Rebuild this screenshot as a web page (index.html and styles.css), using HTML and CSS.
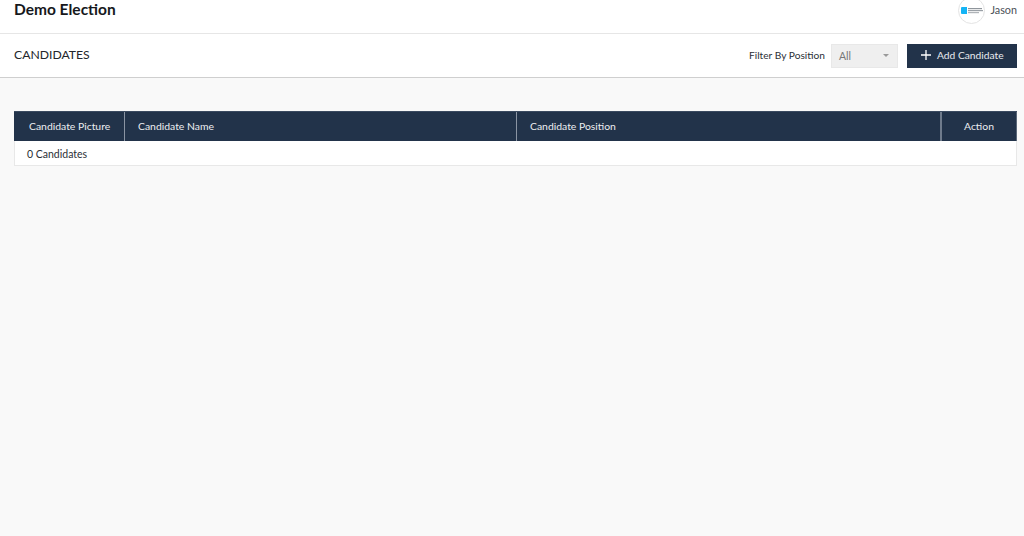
FILE: index.html
```html
<!DOCTYPE html>
<html lang="en">
<head>
<meta charset="utf-8">
<title>Demo Election</title>
<link rel="stylesheet" href="styles.css">
</head>
<body>
<header class="topbar">
  <h1 class="title">Demo Election</h1>
  <div class="user">
    <span class="avatar">
      <svg width="22" height="7" viewBox="0 0 22 7" aria-hidden="true">
        <path d="M1 0h5v7H1a1 1 0 0 1-1-1V1a1 1 0 0 1 1-1z" fill="#14b4f5"/>
        <rect x="7" y="1" width="14" height="1.2" fill="#8f959b"/>
        <rect x="7" y="3" width="15" height="1.2" fill="#9aa0a6"/>
        <rect x="7" y="5" width="11" height="1.2" fill="#b0b4b8"/>
      </svg>
    </span>
    <span class="user-name">Jason</span>
  </div>
</header>
<section class="subbar">
  <h2 class="subtitle">CANDIDATES</h2>
  <div class="controls">
    <span class="filter-label">Filter By Position</span>
    <div class="select"><span>All</span><i class="caret"></i></div>
    <button class="add-btn" type="button">
      <svg width="10" height="10" viewBox="0 0 10 10" aria-hidden="true"><path d="M5 0v10M0 5h10" stroke="#fff" stroke-width="1.3" fill="none"/></svg>
      <span>Add Candidate</span>
    </button>
  </div>
</section>
<main class="content">
  <div class="table">
    <div class="thead">
      <div class="th col-picture">Candidate Picture</div>
      <div class="th col-name">Candidate Name</div>
      <div class="th col-position">Candidate Position</div>
      <div class="th col-action">Action</div>
    </div>
    <div class="tbody">0 Candidates</div>
  </div>
</main>
</body>
</html>
```
FILE: styles.css
```css
* { box-sizing: border-box; }
html, body { height: 100%; }
body {
  margin: 0;
  background: #f9f9f9;
  font-family: "Lato", "Liberation Sans", sans-serif;
  color: #2b2f36;
  overflow: hidden;
}
.topbar {
  height: 34px;
  background: #fff;
  border-bottom: 1px solid #e6e6e6;
  display: flex;
  align-items: flex-start;
  justify-content: space-between;
  padding: 0 7px 0 14px;
}
.title {
  margin: 0;
  font-size: 15.5px;
  line-height: 18px;
  font-weight: 700;
  color: #16181c;
}
.user {
  display: flex;
  align-items: center;
  gap: 5px;
  margin-top: -3px;
}
.avatar {
  width: 27px;
  height: 27px;
  border-radius: 50%;
  background: #fff;
  border: 1px solid #e4e4e4;
  display: flex;
  align-items: center;
  justify-content: center;
}
.user-name { font-size: 10.8px; color: #4a4f57; margin-top: -3px; }
.subbar {
  height: 44px;
  background: #fff;
  border-bottom: 1px solid #cfcfcf;
  display: flex;
  align-items: center;
  justify-content: space-between;
  padding: 0 7px 0 14px;
}
.subtitle {
  margin: 0 0 2px;
  font-size: 12.2px;
  font-weight: 400;
  color: #23262b;
}
.controls { display: flex; align-items: center; }
.filter-label { font-size: 10.2px; color: #2b2f36; margin: 0 6px 1px 0; }
.select {
  width: 67px;
  height: 24px;
  background: #efefef;
  border: 1px solid #e8e8e8;
  display: flex;
  align-items: center;
  justify-content: space-between;
  padding: 0 8px 0 7px;
  font-size: 10.5px;
  color: #777;
  margin-right: 9px;
}
.caret {
  width: 0;
  height: 0;
  border-left: 3.5px solid transparent;
  border-right: 3.5px solid transparent;
  border-top: 3.5px solid #999;
}
.add-btn {
  width: 110px;
  height: 24px;
  border: 0;
  background: #22334a;
  color: #e8ebef;
  font: inherit;
  font-size: 10.25px;
  display: flex;
  align-items: center;
  gap: 6px;
  padding: 0 0 1px 14px;
}
.content { padding: 33px 7px 0 14px; }
.table {
  background: #fff;
  border: 1px solid #e8e8e8;
  border-top: 0;
}
.thead {
  display: flex;
  height: 30px;
  background: #22334a;
  margin: 0 -1px;
  border-top: 1px solid #3a4a60;
}
.th {
  display: flex;
  align-items: center;
  font-size: 10.4px;
  padding-bottom: 1px;
  color: #eceef1;
  border-right: 1px solid #8a94a3;
}
.col-picture { width: 111px; padding-left: 15px; }
.col-name { width: 392px; padding-left: 13px; }
.col-position { width: 425px; padding-left: 13px; border-right: 2px solid #6f7b8c; }
.col-action { flex: 1; justify-content: center; border-right: 1px solid #5b6879; }
.tbody {
  height: 24px;
  display: flex;
  align-items: center;
  padding: 1px 0 0 12px;
  font-size: 10.5px;
  color: #2b2f36;
}
```
